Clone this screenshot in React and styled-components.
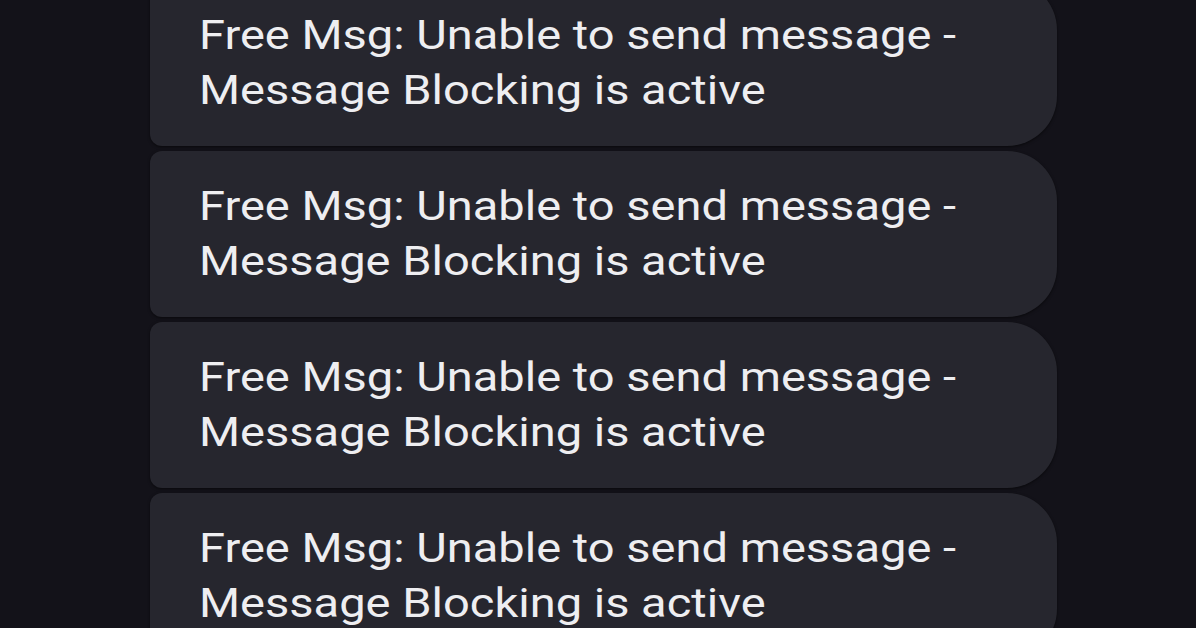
import React from 'react';
import styled, { createGlobalStyle } from 'styled-components';

const GlobalStyle = createGlobalStyle`
  html, body {
    margin: 0;
    padding: 0;
    background: #131219;
    overflow: hidden;
  }
`;

const Screen = styled.div`
  width: 1196px;
  height: 628px;
  background: #131219;
  overflow: hidden;
  font-family: Roboto, "Liberation Sans", sans-serif;
`;

const Thread = styled.div`
  display: flex;
  flex-direction: column;
  gap: 5px;
  width: 907px;
  margin: -20px 0 0 150px;
`;

const Bubble = styled.div`
  box-sizing: border-box;
  height: 166px;
  padding: 28px 40px 0 49px;
  background: #26262e;
  border-radius: 12px 50px 50px 12px;
  box-shadow: 0 1px 3px rgba(0, 0, 0, 0.55);
  color: #eeeef1;
  font-size: 40px;
  line-height: 55px;
`;

/* the source capture is stretched sideways, so the text is widened to match */
const Text = styled.div`
  transform: scaleX(1.176);
  transform-origin: left top;
`;

const Line = styled.div`
  white-space: nowrap;
`;

const messages = [1, 2, 3, 4];

export default function App() {
  return (
    <Screen>
      <GlobalStyle />
      <Thread>
        {messages.map((id) => (
          <Bubble key={id}>
            <Text>
              <Line>Free Msg: Unable to send message -</Line>
              <Line>Message Blocking is active</Line>
            </Text>
          </Bubble>
        ))}
      </Thread>
    </Screen>
  );
}
